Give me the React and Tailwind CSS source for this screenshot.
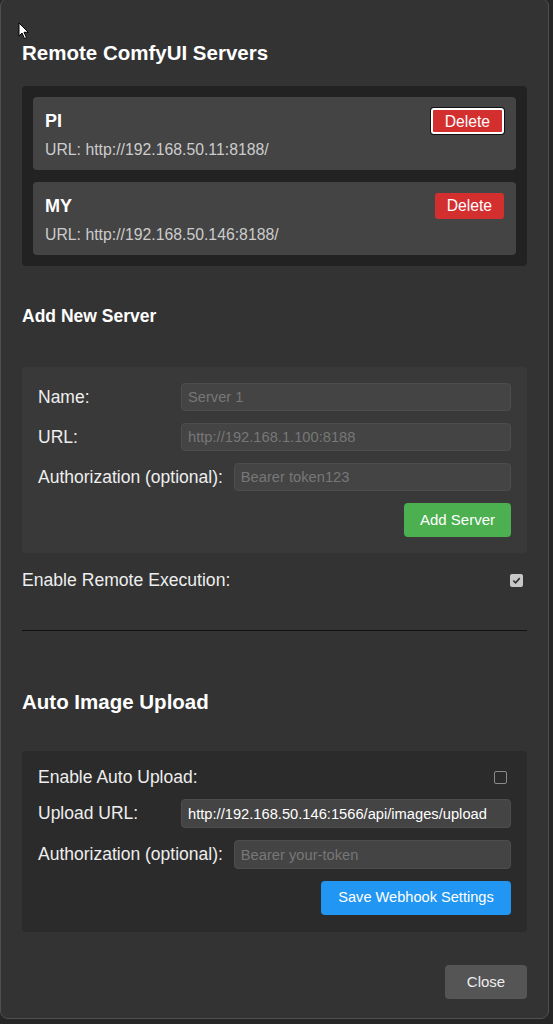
import React from "react";

const servers = [
  { name: "PI", url: "http://192.168.50.11:8188/", focused: true },
  { name: "MY", url: "http://192.168.50.146:8188/" },
];

function Field({ label, placeholder, value, wide, tall }) {
  return (
    <div className="flex items-center mb-3">
      <label className={"text-[17.5px] text-[#eee] shrink-0 " + (wide ? "mr-[11px]" : "w-[143px]")}>
        {label}
      </label>
      <input
        className={
          "flex-1 min-w-0 rounded-[4px] bg-[#444] border border-[#4d4d4d] px-[6px] text-[14.7px] text-white placeholder:text-[#777] outline-none " +
          (tall ? "h-[29px]" : "h-[28px]")
        }
        placeholder={placeholder}
        defaultValue={value}
      />
    </div>
  );
}

function Checkbox({ checked }) {
  if (checked) {
    return (
      <span className="w-[13px] h-[13px] rounded-[2px] bg-[#c8c8c8] flex items-center justify-center">
        <svg width="9" height="9" viewBox="0 0 10 10">
          <path d="M1.5 5.2 L4 7.6 L8.6 2.4" fill="none" stroke="#333" strokeWidth="1.8" />
        </svg>
      </span>
    );
  }
  return <span className="w-[13px] h-[13px] rounded-[2px] border border-[#8a8a8a] bg-[#2b2b2b]" />;
}

export default function App() {
  return (
    <div className="w-[553px] h-[1024px] bg-[#262626] overflow-hidden relative font-['Liberation_Sans',Arial,sans-serif]">
      <div className="w-[549px] h-[1021px] -mt-[2px] bg-[#333] border border-[#4f4f4f] rounded-[8px] px-[21px] pt-[42px] flex flex-col">
        <h2 className="text-[20.5px] leading-[24px] font-bold text-white">Remote ComfyUI Servers</h2>

        <div className="mt-[21px] bg-[#222] rounded-[4px] p-[11px] flex flex-col gap-3">
          {servers.map((s) => (
            <div key={s.name} className="bg-[#444] rounded-[4px] px-3 pt-[11px] pb-3">
              <div className="flex items-center justify-between h-[26px]">
                <span className="text-[18px] font-bold text-white">{s.name}</span>
                <button
                  className={
                    "h-[26px] px-3 rounded-[3px] bg-[#d32f2f] text-white text-[15.7px] " +
                    (s.focused ? "border-2 border-white shadow-[0_0_0_1px_#111]" : "")
                  }
                >
                  Delete
                </button>
              </div>
              <div className="mt-[7px] text-[15.8px] leading-[17px] text-[#ccc]">URL: {s.url}</div>
            </div>
          ))}
        </div>

        <h3 className="mt-[41px] text-[17.5px] leading-[19px] font-bold text-white">Add New Server</h3>

        <div className="mt-[41px] bg-[#393939] rounded-[4px] px-4 pt-4 pb-4">
          <Field label="Name:" placeholder="Server 1" />
          <Field label="URL:" placeholder="http://192.168.1.100:8188" />
          <Field label="Authorization (optional):" placeholder="Bearer token123" wide />
          <div className="flex justify-end">
            <button className="h-[34px] w-[107px] rounded-[4px] bg-[#4caf50] text-white text-[15px]">Add Server</button>
          </div>
        </div>

        <div className="mt-[18px] flex items-center justify-between pr-[4px] h-[18px]">
          <span className="text-[17.6px] text-[#eee]">Enable Remote Execution:</span>
          <Checkbox checked />
        </div>

        <div className="mt-[41px] h-px bg-[#111]" />

        <h2 className="mt-[59px] text-[20.5px] leading-[24px] font-bold text-white">Auto Image Upload</h2>

        <div className="mt-[37px] bg-[#2b2b2b] rounded-[4px] px-4 pt-[17px] pb-[17px]">
          <div className="flex items-center justify-between h-[18px] mb-[13px] pr-[4px]">
            <span className="text-[17.5px] text-[#eee]">Enable Auto Upload:</span>
            <Checkbox />
          </div>
          <Field label="Upload URL:" value="http://192.168.50.146:1566/api/images/upload" tall />
          <Field label="Authorization (optional):" placeholder="Bearer your-token" wide tall />
          <div className="flex justify-end">
            <button className="h-[34px] w-[190px] rounded-[4px] bg-[#2196f3] text-white text-[14.6px]">
              Save Webhook Settings
            </button>
          </div>
        </div>

        <div className="mt-[33px] flex justify-end">
          <button className="h-[34px] w-[82px] rounded-[4px] bg-[#555] text-[#eee] text-[15px]">Close</button>
        </div>
      </div>

      <svg className="absolute left-[18px] top-[22px]" width="12" height="18" viewBox="0 0 12 18">
        <path d="M1 1 L1 14 L4 11 L6.5 16.5 L8.5 15.6 L6 10.3 L10.3 10.3 Z" fill="white" stroke="black" strokeWidth="1" />
      </svg>
    </div>
  );
}
